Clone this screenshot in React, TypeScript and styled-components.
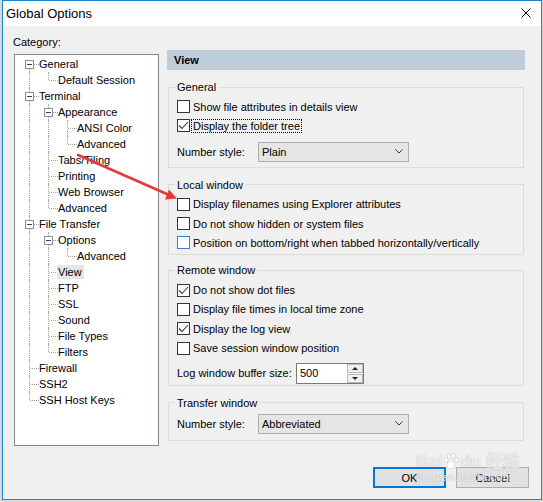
import React from 'react'
import styled, { createGlobalStyle } from 'styled-components'

const GlobalStyle = createGlobalStyle`
  html, body {
    margin: 0;
    padding: 0;
  }
  body {
    background: #d8d8d8;
    font-family: 'Liberation Sans', Arial, sans-serif;
    font-size: 11px;
    color: #000;
  }
`

const Desktop = styled.div`
  position: relative;
  width: 543px;
  height: 502px;
  padding-left: 2px;
  box-sizing: border-box;
  overflow: hidden;
`

const Window = styled.div`
  width: 540px;
  height: 500px;
  box-sizing: border-box;
  border: 1px solid #1883d7;
  background: #f0f0f0;
  display: flex;
  flex-direction: column;
`

const TitleBar = styled.div`
  height: 25px;
  background: #fff;
  display: flex;
  align-items: center;
  justify-content: space-between;
  padding: 0 10px 0 3px;
`

const Title = styled.span`
  font-size: 13px;
  line-height: 23px;
`

const CloseGlyph = styled.svg`
  display: block;
  margin-top: -1px;
`

const Body = styled.div`
  display: flex;
  padding: 8px 0 0 11px;
`

const LeftColumn = styled.div`
  width: 145px;
  flex: none;
`

const Caption = styled.div`
  line-height: 16px;
  margin-left: -1px;
`

const TreeBox = styled.div`
  margin-top: 4px;
  height: 392px;
  box-sizing: border-box;
  border: 1px solid #828790;
  background: #fff;
  padding: 1px 0 0 5px;
`

const TreeRow = styled.div`
  display: flex;
  align-items: center;
  height: 16px;
`

type Link = 'tee' | 'elbow' | 'first'
type CellKind = 'pipe' | 'none' | Link

const Cell = styled.span<{ $kind: CellKind }>`
  position: relative;
  flex: none;
  width: 19px;
  height: 16px;

  &::before {
    content: '';
    position: absolute;
    left: 9px;
    border-left: 1px dotted #a0a0a0;
    display: ${p => (p.$kind === 'none' ? 'none' : 'block')};
    top: ${p => (p.$kind === 'first' ? '8px' : '0')};
    bottom: ${p => (p.$kind === 'elbow' ? '8px' : '0')};
  }

  &::after {
    content: '';
    position: absolute;
    left: 10px;
    right: 0;
    top: 8px;
    border-top: 1px dotted #a0a0a0;
    display: ${p => (p.$kind === 'pipe' || p.$kind === 'none' ? 'none' : 'block')};
  }
`

const Expander = styled.span`
  position: absolute;
  left: 5px;
  top: 4px;
  width: 9px;
  height: 9px;
  box-sizing: border-box;
  border: 1px solid #919191;
  background: #fff;
  z-index: 1;

  &::after {
    content: '';
    position: absolute;
    left: 1px;
    top: 3px;
    width: 5px;
    height: 1px;
    background: #27457f;
  }
`

const NodeLabel = styled.span<{ $selected?: boolean }>`
  position: relative;
  margin-left: -1px;
  padding: 0 2px 0 1px;
  line-height: 14px;
  white-space: nowrap;
  background: ${p => (p.$selected ? '#e5e5e5' : 'transparent')};
`

const RightColumn = styled.div`
  width: 358px;
  margin-left: 8px;
  padding-top: 16px;
`

const PageHeader = styled.div`
  height: 20px;
  line-height: 20px;
  padding-left: 7px;
  background: #bfcddb;
  font-weight: bold;
`

const Groups = styled.div`
  margin-left: 1px;
  width: 356px;
`

const Group = styled.fieldset<{ $gap: number; $padTop: number; $padBottom: number }>`
  margin: ${p => p.$gap}px 0 0;
  padding: ${p => p.$padTop}px 8px ${p => p.$padBottom}px;
  border: 1px solid #dcdcdc;
  min-width: 0;
`

const Legend = styled.legend`
  padding: 0 2px;
  margin-left: -2px;
  line-height: 16px;
`

const CheckRow = styled.div`
  display: flex;
  align-items: center;
  height: 19.3px;
`

const Box = styled.span<{ $hot?: boolean }>`
  flex: none;
  width: 13px;
  height: 13px;
  box-sizing: border-box;
  border: 1px solid ${p => (p.$hot ? '#3483d4' : '#333')};
  background: #fff;
  display: flex;
  align-items: center;
  justify-content: center;
`

const CheckText = styled.span<{ $focused?: boolean }>`
  margin-left: 1px;
  padding: 0 1px;
  line-height: 12px;
  border: 1px ${p => (p.$focused ? 'dotted #000' : 'solid transparent')};
  white-space: nowrap;
`

const FieldRow = styled.div<{ $gap: number }>`
  display: flex;
  align-items: center;
  margin-top: ${p => p.$gap}px;
`

const FieldLabel = styled.span<{ $width: number }>`
  flex: none;
  width: ${p => p.$width}px;
`

const Combo = styled.div`
  width: 151px;
  height: 20px;
  box-sizing: border-box;
  border: 1px solid #adadad;
  background: #e5e5e5;
  display: flex;
  align-items: center;
  justify-content: space-between;
  padding: 0 5px 0 3px;
`

const Spin = styled.div`
  display: flex;
  width: 68px;
  height: 21px;
  box-sizing: border-box;
  border: 1px solid #7a7a7a;
  background: #fff;
`

const SpinValue = styled.span`
  flex: 1;
  padding-left: 3px;
  line-height: 19px;
`

const SpinButtons = styled.div`
  width: 16px;
  display: flex;
  flex-direction: column;
  gap: 1px;
  padding: 0 0 0 1px;
`

const SpinButton = styled.span<{ $down?: boolean }>`
  flex: 1;
  display: flex;
  align-items: center;
  justify-content: center;
  box-sizing: border-box;
  border: 1px solid #b9b9b9;
  background: #f0f0f0;

  &::after {
    content: '';
    border-left: 3px solid transparent;
    border-right: 3px solid transparent;
    ${p => (p.$down ? 'border-top: 3px solid #222;' : 'border-bottom: 3px solid #222;')}
  }
`

const Footer = styled.div`
  display: flex;
  justify-content: flex-end;
  gap: 10px;
  margin-top: 21px;
  padding-right: 12px;
`

const Button = styled.button<{ $default?: boolean }>`
  width: 73px;
  height: 21px;
  box-sizing: border-box;
  padding: 0;
  font: inherit;
  color: #000;
  background: #e1e1e1;
  border: ${p => (p.$default ? '2px solid #0078d7' : '1px solid #adadad')};
`

const Annotation = styled.svg`
  position: absolute;
  left: 0;
  top: 0;
  pointer-events: none;
`

const Watermark = styled.div`
  position: absolute;
  left: 416px;
  top: 452px;
  color: rgba(255, 255, 255, 0.75);
  text-shadow: 0 0 1px rgba(0, 0, 0, 0.3);
  pointer-events: none;
`

const MarkLine = styled.div<{ $size: number }>`
  display: flex;
  align-items: center;
  font-size: ${p => p.$size}px;
  font-weight: bold;
  line-height: ${p => p.$size + 2}px;
  font-family: 'Liberation Sans', 'Noto Sans CJK SC', sans-serif;
`

type TreeNode = { label: string; children?: TreeNode[]; selected?: boolean }
type Row = { label: string; guides: boolean[]; link: Link; open: boolean; selected?: boolean }

const tree: TreeNode[] = [
  { label: 'General', children: [{ label: 'Default Session' }] },
  {
    label: 'Terminal',
    children: [
      { label: 'Appearance', children: [{ label: 'ANSI Color' }, { label: 'Advanced' }] },
      { label: 'Tabs/Tiling' },
      { label: 'Printing' },
      { label: 'Web Browser' },
      { label: 'Advanced' },
    ],
  },
  {
    label: 'File Transfer',
    children: [
      { label: 'Options', children: [{ label: 'Advanced' }] },
      { label: 'View', selected: true },
      { label: 'FTP' },
      { label: 'SSL' },
      { label: 'Sound' },
      { label: 'File Types' },
      { label: 'Filters' },
    ],
  },
  { label: 'Firewall' },
  { label: 'SSH2' },
  { label: 'SSH Host Keys' },
]

function flatten(nodes: TreeNode[], guides: boolean[] = [], out: Row[] = []): Row[] {
  nodes.forEach((n, i) => {
    const last = i === nodes.length - 1
    const link: Link = guides.length === 0 && i === 0 ? 'first' : last ? 'elbow' : 'tee'
    out.push({ label: n.label, guides, link, open: !!n.children, selected: n.selected })
    if (n.children) flatten(n.children, [...guides, !last], out)
  })
  return out
}

const Check = ({ checked }: { checked?: boolean }) => (
  <svg width="11" height="11" viewBox="0 0 11 11">
    {checked && <polyline points="1,5.5 4,8.5 10,2" fill="none" stroke="#333" strokeWidth="1.1" />}
  </svg>
)

const CheckItem = ({
  label,
  checked,
  focused,
  hot,
}: {
  label: string
  checked?: boolean
  focused?: boolean
  hot?: boolean
}) => (
  <CheckRow>
    <Box $hot={hot}>
      <Check checked={checked} />
    </Box>
    <CheckText $focused={focused}>{label}</CheckText>
  </CheckRow>
)

const Chevron = () => (
  <svg width="8" height="5" viewBox="0 0 8 5">
    <polyline points="0.5,0.5 4,4 7.5,0.5" fill="none" stroke="#333" strokeWidth="1" />
  </svg>
)

const Select = ({ value }: { value: string }) => (
  <Combo>
    <span>{value}</span>
    <Chevron />
  </Combo>
)

export default function App() {
  const rows = flatten(tree)
  return (
    <Desktop>
      <GlobalStyle />
      <Window>
        <TitleBar>
          <Title>Global Options</Title>
          <CloseGlyph width="10" height="10" viewBox="0 0 10 10">
            <path d="M0.5 0.5 L9.5 9.5 M9.5 0.5 L0.5 9.5" stroke="#000" strokeWidth="1" />
          </CloseGlyph>
        </TitleBar>
        <Body>
          <LeftColumn>
            <Caption>Category:</Caption>
            <TreeBox>
              {rows.map((r, i) => (
                <TreeRow key={i}>
                  {r.guides.map((g, j) => (
                    <Cell key={j} $kind={g ? 'pipe' : 'none'} />
                  ))}
                  <Cell $kind={r.link}>{r.open && <Expander />}</Cell>
                  <NodeLabel $selected={r.selected}>{r.label}</NodeLabel>
                </TreeRow>
              ))}
            </TreeBox>
          </LeftColumn>
          <RightColumn>
            <PageHeader>View</PageHeader>
            <Groups>
              <Group $gap={9} $padTop={2} $padBottom={5}>
                <Legend>General</Legend>
                <CheckItem label="Show file attributes in details view" />
                <CheckItem label="Display the folder tree" checked focused />
                <FieldRow $gap={6}>
                  <FieldLabel $width={81}>Number style:</FieldLabel>
                  <Select value="Plain" />
                </FieldRow>
              </Group>
              <Group $gap={9} $padTop={2} $padBottom={2}>
                <Legend>Local window</Legend>
                <CheckItem label="Display filenames using Explorer attributes" />
                <CheckItem label="Do not show hidden or system files" />
                <CheckItem label="Position on bottom/right when tabbed horizontally/vertically" hot />
              </Group>
              <Group $gap={7} $padTop={2} $padBottom={1}>
                <Legend>Remote window</Legend>
                <CheckItem label="Do not show dot files" checked />
                <CheckItem label="Display file times in local time zone" />
                <CheckItem label="Display the log view" checked />
                <CheckItem label="Save session window position" />
                <FieldRow $gap={5}>
                  <FieldLabel $width={119}>Log window buffer size:</FieldLabel>
                  <Spin>
                    <SpinValue>500</SpinValue>
                    <SpinButtons>
                      <SpinButton />
                      <SpinButton $down />
                    </SpinButtons>
                  </Spin>
                </FieldRow>
              </Group>
              <Group $gap={9} $padTop={3} $padBottom={6}>
                <Legend>Transfer window</Legend>
                <FieldRow $gap={0}>
                  <FieldLabel $width={81}>Number style:</FieldLabel>
                  <Select value="Abbreviated" />
                </FieldRow>
              </Group>
            </Groups>
          </RightColumn>
        </Body>
        <Footer>
          <Button $default>OK</Button>
          <Button>Cancel</Button>
        </Footer>
      </Window>

      <Annotation width="543" height="502" viewBox="0 0 543 502">
        <line x1="78" y1="155" x2="168" y2="194.5" stroke="#e8383d" strokeWidth="2.5" strokeLinecap="round" />
        <polygon points="177,198.5 165,199.5 169,189.5" fill="#e8383d" />
      </Annotation>

      <Watermark>
        <MarkLine $size={17}>
          Bai
          <svg width="16" height="17" viewBox="0 0 16 17" style={{ margin: '0 1px' }}>
            <g fill="rgba(255,255,255,0.8)" stroke="rgba(0,0,0,0.18)" strokeWidth="0.6">
              <ellipse cx="3" cy="7" rx="2" ry="2.5" />
              <ellipse cx="6" cy="3" rx="2" ry="2.5" />
              <ellipse cx="10.5" cy="3" rx="2" ry="2.5" />
              <ellipse cx="13.5" cy="7" rx="2" ry="2.5" />
              <path d="M8 8 C4 8 3 14 5 15 C7 16 9 16 11 15 C13 14 12 8 8 8 Z" />
            </g>
          </svg>
          du 经验
        </MarkLine>
        <MarkLine $size={11}>jingyan.baidu.com</MarkLine>
      </Watermark>
    </Desktop>
  )
}
